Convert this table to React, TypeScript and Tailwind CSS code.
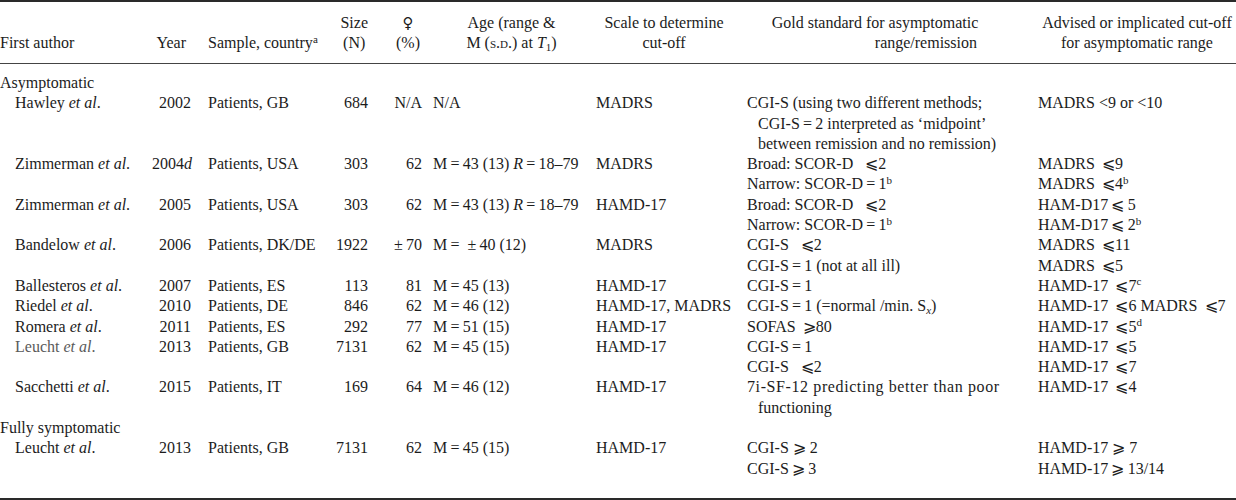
import type { ReactNode } from 'react';

type Row = {
  author: ReactNode;
  year: ReactNode;
  sample: string;
  size: string;
  fem: string;
  age?: ReactNode;
  scale: string;
  gold: ReactNode[];
  advised: ReactNode[];
  gray?: boolean;
};

const le = '\u2A7D';
const ge = '\u2A7E';
const t = '\u2009';

const EtAl = ({ name }: { name: string }) => (
  <>
    {name} <i>et al</i>.
  </>
);

const Sup = ({ children }: { children: ReactNode }) => <sup className="text-[11px]">{children}</sup>;

const Indent = ({ children }: { children: ReactNode }) => <div className="pl-[11px]">{children}</div>;

const asymptomatic: Row[] = [
  {
    author: <EtAl name="Hawley" />,
    year: '2002',
    sample: 'Patients, GB',
    size: '684',
    fem: 'N/A',
    age: 'N/A',
    scale: 'MADRS',
    gold: [
      'CGI-S (using two different methods;',
      <Indent>{`CGI-S${t}=${t}2 interpreted as \u2018midpoint\u2019`}</Indent>,
      <Indent>between remission and no remission)</Indent>,
    ],
    advised: ['MADRS <9 or <10'],
  },
  {
    author: <EtAl name="Zimmerman" />,
    year: (
      <>
        2004<i>d</i>
      </>
    ),
    sample: 'Patients, USA',
    size: '303',
    fem: '62',
    age: (
      <>
        {`M${t}=${t}43 (13) `}
        <i>R</i>
        {`${t}=${t}18\u201379`}
      </>
    ),
    scale: 'MADRS',
    gold: [
      `Broad: SCOR-D \u2002${le}2`,
      <>
        {`Narrow: SCOR-D${t}=${t}1`}
        <Sup>b</Sup>
      </>,
    ],
    advised: [
      `MADRS \u2009${le}9`,
      <>
        {`MADRS \u2009${le}4`}
        <Sup>b</Sup>
      </>,
    ],
  },
  {
    author: <EtAl name="Zimmerman" />,
    year: '2005',
    sample: 'Patients, USA',
    size: '303',
    fem: '62',
    age: (
      <>
        {`M${t}=${t}43 (13) `}
        <i>R</i>
        {`${t}=${t}18\u201379`}
      </>
    ),
    scale: 'HAMD-17',
    gold: [
      `Broad: SCOR-D \u2002${le}2`,
      <>
        {`Narrow: SCOR-D${t}=${t}1`}
        <Sup>b</Sup>
      </>,
    ],
    advised: [
      `HAM-D17${t}${le}${t}5`,
      <>
        {`HAM-D17${t}${le}${t}2`}
        <Sup>b</Sup>
      </>,
    ],
  },
  {
    author: <EtAl name="Bandelow" />,
    year: '2006',
    sample: 'Patients, DK/DE',
    size: '1922',
    fem: `\u00B1${t}70`,
    age: `M${t}=\u2002\u00B1${t}40 (12)`,
    scale: 'MADRS',
    gold: [`CGI-S \u2002${le}2`, `CGI-S${t}=${t}1 (not at all ill)`],
    advised: [`MADRS \u2009${le}11`, `MADRS \u2009${le}5`],
  },
  {
    author: <EtAl name="Ballesteros" />,
    year: '2007',
    sample: 'Patients, ES',
    size: '113',
    fem: '81',
    age: `M${t}=${t}45 (13)`,
    scale: 'HAMD-17',
    gold: [`CGI-S${t}=${t}1`],
    advised: [
      <>
        {`HAMD-17 \u2009${le}7`}
        <Sup>c</Sup>
      </>,
    ],
  },
  {
    author: <EtAl name="Riedel" />,
    year: '2010',
    sample: 'Patients, DE',
    size: '846',
    fem: '62',
    age: `M${t}=${t}46 (12)`,
    scale: 'HAMD-17, MADRS',
    gold: [
      <>
        {`CGI-S${t}=${t}1 (=normal /min. S`}
        <sub className="text-[11px]">
          <i>x</i>
        </sub>
        )
      </>,
    ],
    advised: [`HAMD-17 \u2009${le}6 MADRS \u2009${le}7`],
  },
  {
    author: <EtAl name="Romera" />,
    year: '2011',
    sample: 'Patients, ES',
    size: '292',
    fem: '77',
    age: `M${t}=${t}51 (15)`,
    scale: 'HAMD-17',
    gold: [`SOFAS \u2009${ge}80`],
    advised: [
      <>
        {`HAMD-17 \u2009${le}5`}
        <Sup>d</Sup>
      </>,
    ],
  },
  {
    author: <EtAl name="Leucht" />,
    year: '2013',
    sample: 'Patients, GB',
    size: '7131',
    fem: '62',
    age: `M${t}=${t}45 (15)`,
    scale: 'HAMD-17',
    gold: [`CGI-S${t}=${t}1`, `CGI-S \u2002${le}2`],
    advised: [`HAMD-17 \u2009${le}5`, `HAMD-17 \u2009${le}7`],
    gray: true,
  },
  {
    author: <EtAl name="Sacchetti" />,
    year: '2015',
    sample: 'Patients, IT',
    size: '169',
    fem: '64',
    age: `M${t}=${t}46 (12)`,
    scale: 'HAMD-17',
    gold: [
      <span className="tracking-[0.6px]">7i-SF-12 predicting better than poor</span>,
      <Indent>functioning</Indent>,
    ],
    advised: [`HAMD-17 \u2009${le}4`],
  },
];

const fully: Row[] = [
  {
    author: <EtAl name="Leucht" />,
    year: '2013',
    sample: 'Patients, GB',
    size: '7131',
    fem: '62',
    age: `M${t}=${t}45 (15)`,
    scale: 'HAMD-17',
    gold: [`CGI-S ${ge} 2`, `CGI-S${t}${ge}${t}3`],
    advised: [`HAMD-17 ${ge} 7`, `HAMD-17${t}${ge}${t}13/14`],
  },
];

function DataRow({ row, last }: { row: Row; last?: boolean }) {
  const pb = last ? 'pb-[19px]' : '';
  return (
    <tr className="[&>td]:align-top">
      <td className={`pl-[15px] ${pb} ${row.gray ? 'text-[#5a5a5a]' : ''}`}>{row.author}</td>
      <td className={`text-right ${pb}`}>{row.year}</td>
      <td className={`pl-[17px] ${pb}`}>{row.sample}</td>
      <td className={`text-right ${pb}`}>{row.size}</td>
      <td className={`text-right ${pb}`}>{row.fem}</td>
      <td className={`pl-[11px] ${pb}`}>{row.age}</td>
      <td className={`pl-[6px] ${pb}`}>{row.scale}</td>
      <td className={`pl-[6px] ${pb}`}>
        {row.gold.map((g, i) => (
          <div key={i}>{g}</div>
        ))}
      </td>
      <td className={`pl-[7px] ${pb}`}>
        {row.advised.map((a, i) => (
          <div key={i}>{a}</div>
        ))}
      </td>
    </tr>
  );
}

function GroupRow({ label, first }: { label: string; first?: boolean }) {
  return (
    <tr>
      <td colSpan={9} className={`align-top ${first ? 'pt-[9px]' : ''}`}>
        {label}
      </td>
    </tr>
  );
}

export default function App() {
  return (
    <div className="w-[1236px] h-[500px] bg-white text-[#1c1c1c] font-['Liberation_Serif','DejaVu_Serif',serif] text-[16px] leading-[20.3px]">
      <table className="w-[1236px] table-fixed border-collapse border-t-2 border-b-2 border-[#2a2a2a]">
        <colgroup>
          <col className="w-[152px]" />
          <col className="w-[39px]" />
          <col className="w-[144px]" />
          <col className="w-[33px]" />
          <col className="w-[54px]" />
          <col className="w-[168px]" />
          <col className="w-[151px]" />
          <col className="w-[290px]" />
          <col className="w-[205px]" />
        </colgroup>
        <thead>
          <tr className="border-b-[1.5px] border-[#444] [&>th]:font-normal [&>th]:pt-[11px] [&>th]:pb-[10px] [&>th]:leading-[20px] [&>th]:align-bottom">
            <th className="text-left">First author</th>
            <th className="text-right pr-[5px]">Year</th>
            <th className="text-left pl-[17px]">
              Sample, country<Sup>a</Sup>
            </th>
            <th className="text-right">
              <span className="inline-block text-center">
                Size
                <br />
                (N)
              </span>
            </th>
            <th className="text-right">
              <span className="inline-block text-center pr-[2px]">
                <span className="font-['DejaVu_Sans',sans-serif] text-[15px]">{'\u2640'}</span>
                <br />
                (%)
              </span>
            </th>
            <th className="text-center pl-[11px]">
              Age (range &amp;
              <br />M (<span className="[font-variant:small-caps]">s.d.</span>) at <i>T</i>
              <sub className="text-[11px]">1</sub>)
            </th>
            <th className="text-center pl-[6px] pr-[9px]">
              Scale to determine
              <br />
              cut-off
            </th>
            <th className="pl-[16px] pr-[38px]">
              <div className="text-center">Gold standard for asymptomatic</div>
              <div className="text-right pr-[16px]">range/remission</div>
            </th>
            <th className="text-center pl-[7px]">
              Advised or implicated cut-off
              <br />
              for asymptomatic range
            </th>
          </tr>
        </thead>
        <tbody>
          <GroupRow label="Asymptomatic" first />
          {asymptomatic.map((r, i) => (
            <DataRow key={i} row={r} />
          ))}
          <GroupRow label="Fully symptomatic" />
          {fully.map((r, i) => (
            <DataRow key={i} row={r} last={i === fully.length - 1} />
          ))}
        </tbody>
      </table>
    </div>
  );
}
